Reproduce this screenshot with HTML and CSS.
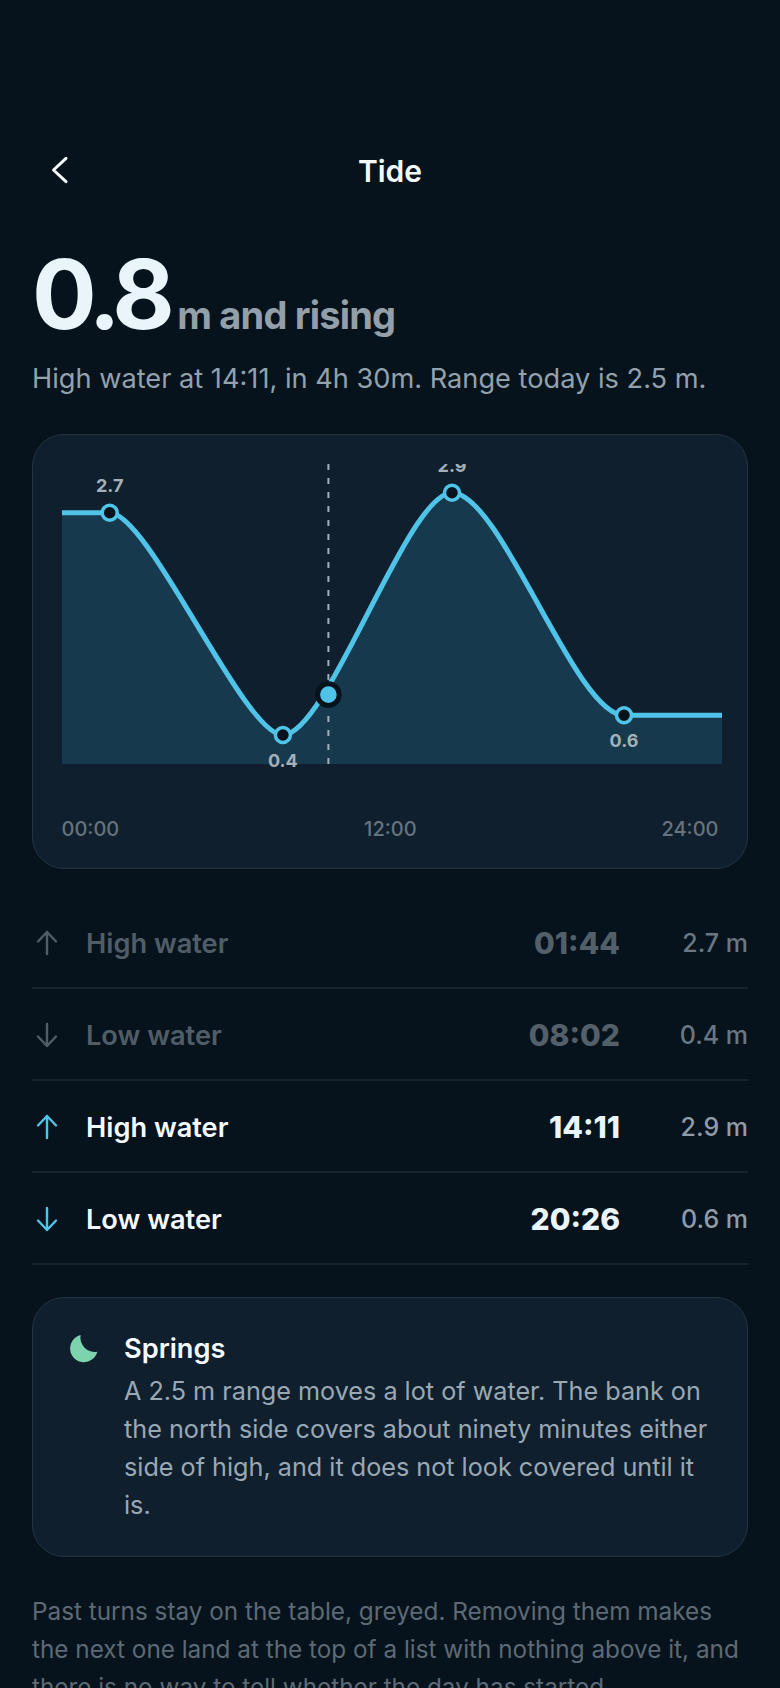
FILE: index.html
```html
<!DOCTYPE html>
<html lang="en">
<head>
    <meta charset="UTF-8">
    <meta name="viewport" content="width=device-width, initial-scale=1.0">
    <title>Tide</title>
    <link rel="stylesheet" href="styles.css">
</head>
<body>
    <div class="screen">
        <header class="topbar">
            <svg class="back" width="28" height="28" viewBox="0 0 28 28" fill="none" stroke="currentColor" stroke-width="3" stroke-linecap="round" stroke-linejoin="round"><path d="M20 2.3 L7.5 14 L20 25.7"/></svg>
            <h1>Tide</h1>
        </header>

        <div class="hero">
            <span class="level">0.8</span>
            <span class="unit">m and rising</span>
        </div>
        <p class="summary">High water at 14:11, in 4h 30m. Range today is 2.5 m.</p>

        <div class="card chart">
            <svg class="plot" width="660" height="320" viewBox="0 0 660 320">
                <!-- cosine curve between the four turns -->
                <path class="area" d="M0 48.7 L47.7 48.7 C87 48.7 181.6 271 220.9 271 C265.7 271 345.2 28.7 390 28.7 C439 28.7 513 251.3 562 251.3 L660 251.3 L660 300 L0 300 Z"/>
                <line class="now-line" x1="266.4" y1="0" x2="266.4" y2="300"/>
                <path class="tide-line" d="M0 48.7 L47.7 48.7 C87 48.7 181.6 271 220.9 271 C265.7 271 345.2 28.7 390 28.7 C439 28.7 513 251.3 562 251.3 L660 251.3"/>
                <circle class="turn" cx="47.7" cy="48.7" r="7.5"/>
                <circle class="turn" cx="220.9" cy="271" r="7.5"/>
                <circle class="turn" cx="390" cy="28.7" r="7.5"/>
                <circle class="turn" cx="562" cy="251.3" r="7.5"/>
                <circle class="now-dot" cx="266.4" cy="230.6" r="10.8"/>
                <text class="turn-label" x="47.7" y="27.7">2.7</text>
                <text class="turn-label" x="220.9" y="303">0.4</text>
                <text class="turn-label" x="390" y="7.7">2.9</text>
                <text class="turn-label" x="562" y="283.3">0.6</text>
            </svg>
            <div class="axis">
                <span>00:00</span>
                <span>12:00</span>
                <span>24:00</span>
            </div>
        </div>

        <div class="turns">
            <div class="row past">
                <svg class="arrow" width="24" height="26" viewBox="0 0 24 26" fill="none" stroke="currentColor" stroke-width="2.4" stroke-linecap="round" stroke-linejoin="round"><path d="M12 2 V24 M3 11.5 L12 2 L21 11.5"/></svg>
                <span class="name">High water</span>
                <span class="time">01:44</span>
                <span class="height">2.7 m</span>
            </div>
            <div class="row past">
                <svg class="arrow" width="24" height="26" viewBox="0 0 24 26" fill="none" stroke="currentColor" stroke-width="2.4" stroke-linecap="round" stroke-linejoin="round"><path d="M12 2 V24 M3 14.5 L12 24 L21 14.5"/></svg>
                <span class="name">Low water</span>
                <span class="time">08:02</span>
                <span class="height">0.4 m</span>
            </div>
            <div class="row">
                <svg class="arrow" width="24" height="26" viewBox="0 0 24 26" fill="none" stroke="currentColor" stroke-width="2.4" stroke-linecap="round" stroke-linejoin="round"><path d="M12 2 V24 M3 11.5 L12 2 L21 11.5"/></svg>
                <span class="name">High water</span>
                <span class="time">14:11</span>
                <span class="height">2.9 m</span>
            </div>
            <div class="row">
                <svg class="arrow" width="24" height="26" viewBox="0 0 24 26" fill="none" stroke="currentColor" stroke-width="2.4" stroke-linecap="round" stroke-linejoin="round"><path d="M12 2 V24 M3 14.5 L12 24 L21 14.5"/></svg>
                <span class="name">Low water</span>
                <span class="time">20:26</span>
                <span class="height">0.6 m</span>
            </div>
        </div>

        <div class="card note">
            <svg class="moon" width="28" height="28" viewBox="0 0 28 28"><path d="M10.7 0 A13.8 13.8 0 1 0 27.3 16.7 A14.2 14.2 0 0 1 10.7 0 Z"/></svg>
            <div class="note-body">
                <h2>Springs</h2>
                <p>A 2.5 m range moves a lot of water. The bank on the north side covers about ninety minutes either side of high, and it does not look covered until it is.</p>
            </div>
        </div>

        <p class="footnote">Past turns stay on the table, greyed. Removing them makes the next one land at the top of a list with nothing above it, and there is no way to tell whether the day has started.</p>
    </div>
</body>
</html>
```

FILE: styles.css
```css
* {
    box-sizing: border-box;
}
html, body {
    margin: 0;
    background-color: #06131c;
}
body {
    font-family: Inter, "Noto Sans", sans-serif;
    color: #eaf4fb;
}
.screen {
    width: 780px;
    height: 1688px;
    overflow: hidden;
    padding: 150px 32px 0;
}
.topbar {
    position: relative;
    display: flex;
    justify-content: center;
    align-items: center;
    height: 42px;
}
.topbar h1 {
    margin: 0;
    font-size: 30px;
    font-weight: 600;
    color: #f4fafe;
}
.back {
    position: absolute;
    left: 14px;
    top: 6px;
    color: #f4fafe;
}
.hero {
    display: flex;
    align-items: baseline;
    gap: 8px;
    margin-top: 52px;
    height: 100px;
    line-height: 100px;
}
.level {
    font-size: 96px;
    font-weight: 700;
    letter-spacing: -5.5px;
}
.unit {
    font-size: 38px;
    font-weight: 700;
    letter-spacing: -0.8px;
    color: #939fa9;
}
.summary {
    margin: 16px 0 0;
    font-size: 27.2px;
    line-height: 38px;
    color: #93a1ac;
}
.card {
    background-color: #0f1f2d;
    border: 1.5px solid #233341;
    border-radius: 32px;
}
.chart {
    margin-top: 36px;
    height: 435px;
    padding: 29px 24.5px 0 28.5px;
}
.plot {
    display: block;
    overflow: hidden;
}
.area {
    fill: #17394d;
}
.tide-line {
    fill: none;
    stroke: #4fc3e8;
    stroke-width: 5;
}
.now-line {
    stroke: #9fb0bc;
    stroke-width: 2;
    stroke-dasharray: 6 8;
}
.turn {
    fill: #06131c;
    stroke: #4fc3e8;
    stroke-width: 3.5;
}
.now-dot {
    fill: #4fc3e8;
    stroke: #06131c;
    stroke-width: 5;
}
.turn-label {
    fill: #a3b0ba;
    font-size: 18px;
    font-weight: 700;
    text-anchor: middle;
}
.axis {
    display: flex;
    justify-content: space-between;
    width: 657px;
    margin-top: 33px;
    font-size: 20px;
    font-weight: 500;
    line-height: 24px;
    color: #66737e;
}
.turns {
    margin-top: 28px;
}
.row {
    display: flex;
    align-items: center;
    height: 92px;
    border-bottom: 2px solid #15232e;
    padding-top: 2px;
}
.arrow {
    flex: none;
    color: #4fc3e8;
    margin-left: 3px;
}
.name {
    margin-left: 27px;
    font-size: 27.2px;
    font-weight: 600;
    color: #f4fafe;
}
.time {
    margin-left: auto;
    font-size: 30px;
    font-weight: 800;
    color: #eaf4fb;
}
.height {
    width: 128px;
    text-align: right;
    font-size: 25px;
    font-weight: 500;
    color: #8f9ca7;
}
.past .arrow,
.past .name,
.past .time {
    opacity: 0.5;
}
.past .arrow,
.past .name {
    color: #9aa7b2;
}
.past .time {
    color: #a0adb8;
}
.past .height {
    color: #6a7782;
}
.note {
    display: flex;
    gap: 26px;
    margin-top: 32px;
    padding: 35px 38px 32px 37px;
    background-color: #0f1f2e;
}
.moon {
    flex: none;
    fill: #7dd3ae;
    margin-top: 2px;
}
.note-body h2 {
    margin: 0;
    font-size: 27.2px;
    font-weight: 600;
    line-height: 32px;
    color: #f4fafe;
}
.note-body p {
    margin: 7px 0 0;
    font-size: 25.2px;
    line-height: 38px;
    color: #9aa8b4;
}
.footnote {
    margin: 35px 0 0;
    padding-right: 4px;
    font-size: 24.3px;
    line-height: 38px;
    color: #5d6a75;
}
```
